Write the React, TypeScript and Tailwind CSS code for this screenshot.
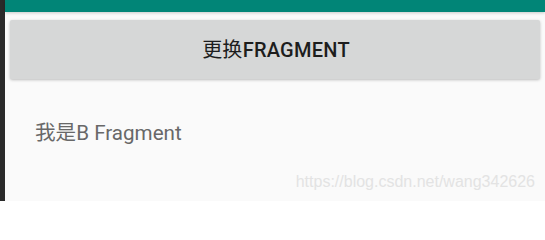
export default function App() {
  return (
    <div className="relative flex w-[545px] h-[201px] overflow-hidden bg-[#fafafa] font-['Roboto','Noto_Sans_CJK_SC',sans-serif]">
      <div className="w-[5px] shrink-0 bg-[#2a2a2a]" />
      <div className="flex flex-1 flex-col">
        <div className="h-[12px] bg-[#018577] shadow-[0_1px_3px_rgba(0,0,0,0.2)]" />
        <button className="mx-[5px] mt-[8px] h-[59px] rounded-[2px] bg-[#d6d7d7] pt-[1px] pl-[2px] text-[20px] font-medium tracking-[0.25px] text-[#1d1d1d] shadow-[0_1px_3px_rgba(0,0,0,0.25)]">
          <span className="font-normal">更换</span>FRAGMENT
        </button>
        <p className="mt-[43px] pl-[30px] text-[20.6px] leading-[22px] text-[#686868]">
          我是B Fragment
        </p>
      </div>
      <span className="absolute right-[10px] bottom-[11px] font-['Liberation_Sans',sans-serif] text-[16px] leading-[16px] text-[#e3e3e3]">
        https://blog.csdn.net/wang342626
      </span>
    </div>
  );
}
